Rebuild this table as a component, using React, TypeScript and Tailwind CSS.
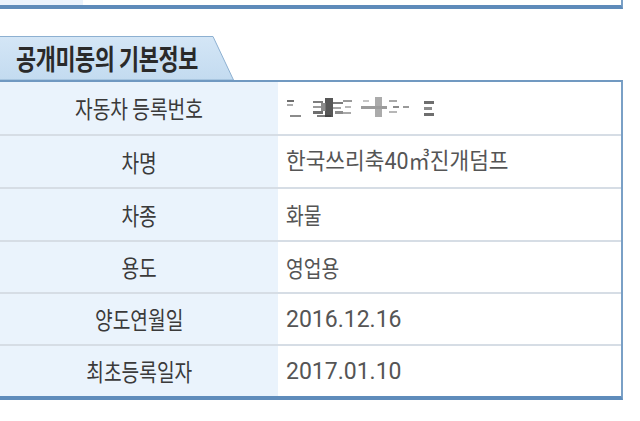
import React from "react";

const rows = [
  { label: "자동차 등록번호", value: "masked" },
  { label: "차명", value: "한국쓰리축40㎥진개덤프", scale: "mixed" },
  { label: "차종", value: "화물" },
  { label: "용도", value: "영업용" },
  { label: "양도연월일", value: "2016.12.16", num: true },
  { label: "최초등록일자", value: "2017.01.10", num: true },
];

const heights = ["h-[52px]", "h-[53px]", "h-[53px]", "h-[52px]", "h-[52px]", "h-[52px]"];

// pixelated plate number, blurred in the source
const mosaic: [number, number, number, number, string][] = [
  [0, 3, 7, 2, "#555"], [0, 7, 6, 2, "#9a9a9a"], [3, 18, 11, 2, "#777"],
  [26, 4, 10, 2, "#666"], [26, 9, 8, 2, "#888"], [26, 14, 10, 3, "#555"], [30, 18, 14, 2, "#666"],
  [38, 1, 8, 19, "#3a3a3a"], [34, 6, 5, 8, "#777"],
  [46, 5, 10, 2, "#666"], [46, 10, 8, 2, "#999"], [48, 14, 8, 3, "#777"],
  [56, 3, 9, 2, "#888"], [58, 9, 6, 2, "#aaa"], [56, 15, 8, 2, "#999"],
  [74, 9, 26, 3, "#8a8a8a"], [88, 0, 7, 20, "#9c9c9c"], [76, 3, 6, 2, "#bbb"],
  [102, 3, 8, 2, "#999"], [106, 9, 6, 2, "#777"], [102, 14, 8, 2, "#aaa"], [116, 9, 6, 2, "#888"],
  [137, 4, 10, 3, "#555"], [137, 10, 8, 3, "#777"], [137, 16, 10, 3, "#555"],
];

function MaskedPlate() {
  return (
    <svg width="150" height="22" viewBox="0 0 150 22" className="ml-px">
      {mosaic.map(([x, y, w, h, c], i) => (
        <rect key={i} x={x} y={y} width={w} height={h} fill={c} opacity={0.85} />
      ))}
    </svg>
  );
}

export default function App() {
  return (
    <div className="w-[640px] h-[421px] overflow-hidden bg-white font-['Noto_Sans_CJK_KR',sans-serif]">
      {/* previous box, cut off at top */}
      <div className="flex w-[623px] h-[9px] border-r-2 border-b-4 border-r-[#7aa0c6] border-b-[#5e8bba]">
        <div className="w-[83px] bg-[#eaf2fc]" />
        <div className="flex-1 bg-white" />
      </div>

      {/* tab */}
      <div className="relative mt-[27px] w-[240px] h-[44px]">
        <svg className="absolute inset-0" width="240" height="44" viewBox="0 0 240 44">
          <defs>
            <linearGradient id="tabg" x1="0" y1="0" x2="0" y2="1">
              <stop offset="0" stopColor="#d4e6f6" />
              <stop offset="1" stopColor="#c3dbf0" />
            </linearGradient>
          </defs>
          <polygon points="-2,0.5 213,0.5 233.5,44 -2,44" fill="url(#tabg)" stroke="#8db0d1" strokeWidth="1" />
        </svg>
        <div className="relative flex h-full items-center pl-[16px]">
          <span className="inline-block origin-left scale-x-[0.78] text-[28px] font-bold leading-none tracking-[-0.5px] text-[#2a2a2a] whitespace-nowrap">
            공개미동의 기본정보
          </span>
        </div>
      </div>

      {/* table */}
      <div className="w-[623px] border-t-2 border-r-2 border-b-4 border-t-[#7199c1] border-r-[#7aa0c6] border-b-[#5f8cbb]">
        {rows.map((r, i) => (
          <div
            key={r.label}
            className={`flex ${heights[i]} ${i > 0 ? "border-t-2 border-[#d6dde5]" : ""}`}
          >
            <div className="flex w-[278px] items-center justify-center bg-[#eaf3fc]">
              <span className="inline-block scale-x-[0.8] text-[24px] leading-none text-[#3a3a3a] whitespace-nowrap">
                {r.label}
              </span>
            </div>
            <div className="flex flex-1 items-center bg-white pl-[8px]">
              {r.value === "masked" ? (
                <MaskedPlate />
              ) : r.num ? (
                <span className="font-['Roboto','Noto_Sans_CJK_KR',sans-serif] text-[23px] leading-none text-[#555]">
                  {r.value}
                </span>
              ) : r.scale === "mixed" ? (
                <span className="inline-block origin-left scale-x-[0.93] font-['Roboto','Noto_Sans_CJK_KR',sans-serif] text-[23px] leading-none text-[#555] whitespace-nowrap">
                  {r.value}
                </span>
              ) : (
                <span className="inline-block origin-left scale-x-[0.84] text-[23px] leading-none text-[#555] whitespace-nowrap">
                  {r.value}
                </span>
              )}
            </div>
          </div>
        ))}
      </div>
    </div>
  );
}
